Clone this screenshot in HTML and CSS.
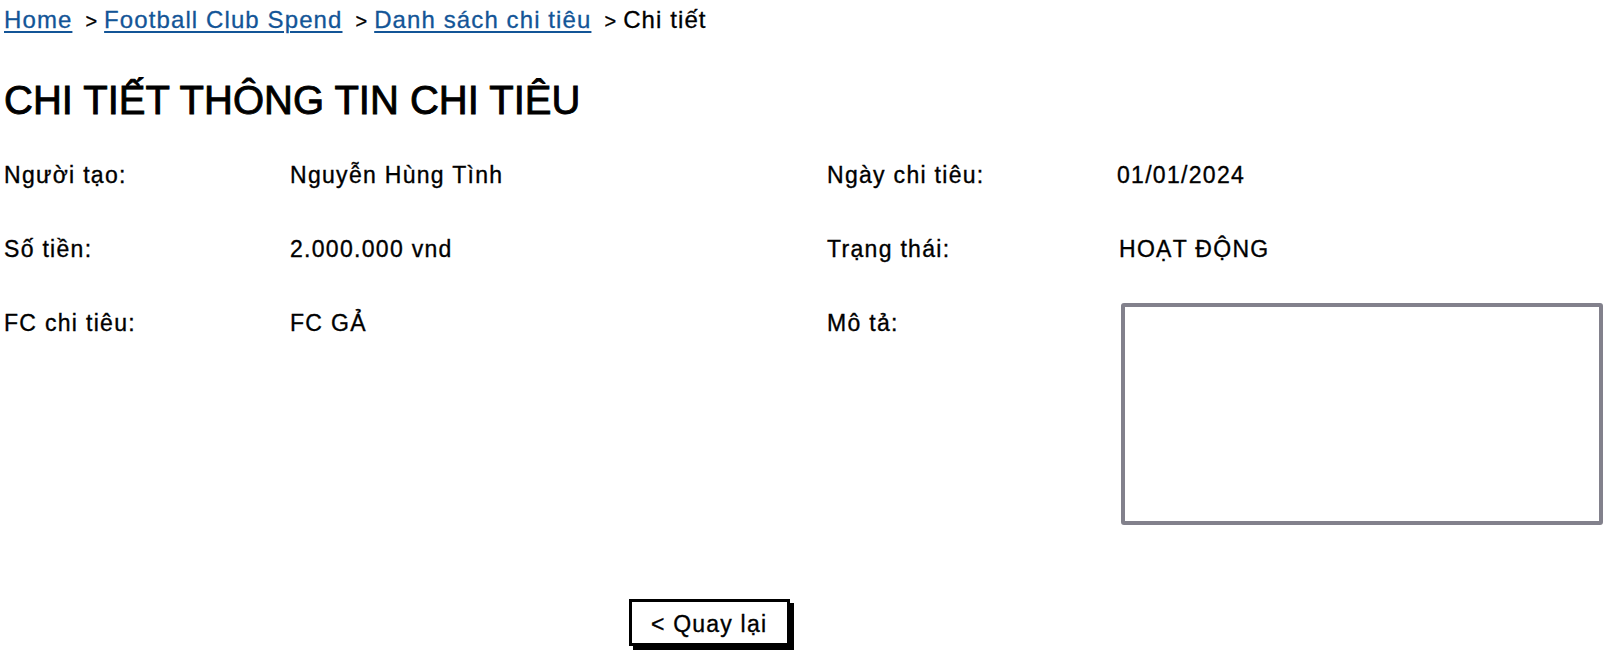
FILE: index.html
```html
<!DOCTYPE html>
<html lang="vi">
<head>
<meta charset="utf-8">
<title>Chi tiết thông tin chi tiêu</title>
<link rel="stylesheet" href="styles.css">
</head>
<body>
<div class="page">
  <nav class="crumbs">
    <a class="crumb-link" href="#">Home</a>
    <span class="crumb-sep">&gt;</span>
    <a class="crumb-link" href="#">Football Club Spend</a>
    <span class="crumb-sep">&gt;</span>
    <a class="crumb-link" href="#">Danh sách chi tiêu</a>
    <span class="crumb-sep">&gt;</span>
    <span class="crumb-current">Chi tiết</span>
  </nav>

  <h1 class="title">CHI TIẾT THÔNG TIN CHI TIÊU</h1>

  <div class="details">
    <div class="label">Người tạo:</div>
    <div class="value">Nguyễn Hùng Tình</div>
    <div class="label">Ngày chi tiêu:</div>
    <div class="value">01/01/2024</div>

    <div class="label">Số tiền:</div>
    <div class="value">2.000.000 vnd</div>
    <div class="label">Trạng thái:</div>
    <div class="value value-status">HOẠT ĐỘNG</div>

    <div class="label">FC chi tiêu:</div>
    <div class="value">FC GẢ</div>
    <div class="label">Mô tả:</div>
    <div class="value"><div class="desc-box"></div></div>
  </div>

  <div class="actions">
    <button class="back-btn" type="button">&lt; Quay lại</button>
  </div>
</div>
</body>
</html>
```

FILE: styles.css
```css
* { box-sizing: border-box; }
html, body { margin: 0; padding: 0; background: #fff; }
body {
  font-family: "Liberation Sans", Arial, sans-serif;
  color: #000;
}
.page {
  width: 1604px;
  height: 652px;
  overflow: hidden;
  padding-left: 4px;
}
.crumbs {
  display: flex;
  align-items: baseline;
  padding-top: 6px;
  font-size: 24px;
  line-height: 28px;
  letter-spacing: 1.1px;
  -webkit-text-stroke: 0.3px currentColor;
}
.crumb-link {
  color: #135597;
  text-decoration: underline;
  text-decoration-thickness: 2px;
  text-underline-offset: 3px;
}
.crumb-sep {
  font-size: 20px;
  margin: 0 7px 0 13px;
  letter-spacing: 0;
  color: #000;
}
.crumb-current { color: #000; }

.title {
  margin: 41px 0 0 0;
  font-size: 40px;
  line-height: 48px;
  font-weight: normal;
  letter-spacing: 0;
  -webkit-text-stroke: 0.9px #000;
}

.details {
  margin-top: 38px;
  display: grid;
  grid-template-columns: 286px 537px 290px 482px;
  row-gap: 47px;
  font-size: 23px;
  line-height: 27px;
  letter-spacing: 1.3px;
  -webkit-text-stroke: 0.35px #000;
}
.label, .value { white-space: nowrap; }
.value-status { padding-left: 2px; }
.desc-box {
  margin-top: -7px;
  margin-left: 4px;
  width: 482px;
  height: 222px;
  border: 4px solid #82818c;
  border-radius: 3px;
  background: #fff;
}

.actions {
  margin-top: 74px;
  padding-left: 625px;
}
.back-btn {
  font-family: "Liberation Sans", Arial, sans-serif;
  font-size: 23px;
  line-height: 26px;
  letter-spacing: 1.2px;
  -webkit-text-stroke: 0.35px #000;
  color: #000;
  background: #fff;
  border: 3px solid #000;
  box-shadow: 4px 4px 0 #000;
  padding: 9px 20px 6px 19px;
  height: 47px;
  border-radius: 0;
  cursor: pointer;
}
```
